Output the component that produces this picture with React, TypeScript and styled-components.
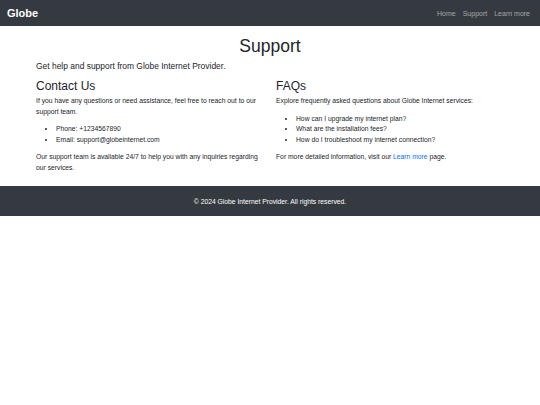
import styled, { createGlobalStyle } from "styled-components";

const GlobalStyle = createGlobalStyle`
  body {
    margin: 0;
    font-family: "Liberation Sans", Arial, sans-serif;
    color: #212529;
    background: #fff;
  }
`;

const Navbar = styled.nav`
  height: 26px;
  background-color: #343a40;
  display: flex;
  align-items: center;
  justify-content: space-between;
  padding: 0 10px 0 7px;
`;

const Brand = styled.a`
  color: #fff;
  font-size: 11px;
  font-weight: bold;
  text-decoration: none;
`;

const NavLinks = styled.div`
  display: flex;
  gap: 7px;
`;

const NavLink = styled.a`
  color: rgba(255, 255, 255, 0.55);
  font-size: 7px;
  text-decoration: none;
`;

const Main = styled.main`
  width: 468px;
  margin: 0 auto;
  padding-top: 10px;
`;

const Title = styled.h1`
  margin: 0 0 3px;
  font-size: 17.5px;
  font-weight: 500;
  line-height: 1.2;
  text-align: center;
`;

const Lead = styled.p`
  margin: 0 0 6px;
  font-size: 8.45px;
  line-height: 1.55;
`;

const Row = styled.div`
  display: grid;
  grid-template-columns: 1fr 1fr;
  gap: 12px;
`;

const Col = styled.section``;

const Heading = styled.h3`
  margin: 0 0 3px;
  font-size: 12px;
  font-weight: 500;
  line-height: 1.2;
`;

const Text = styled.p`
  margin: 0 0 7px;
  font-size: 6.75px;
  line-height: 10.5px;
`;

const List = styled.ul`
  margin: 0 0 7px;
  padding-left: 20px;
  font-size: 6.75px;
  line-height: 10.5px;
`;

const Link = styled.a`
  color: #0d6efd;
  text-decoration: none;
`;

const Footer = styled.footer`
  margin-top: 6px;
  height: 30px;
  background-color: #343a40;
  color: #fff;
  font-size: 6.75px;
  display: flex;
  align-items: center;
  justify-content: center;
`;

function App() {
  return (
    <>
      <GlobalStyle />
      <Navbar>
        <Brand href="#">Globe</Brand>
        <NavLinks>
          <NavLink href="#">Home</NavLink>
          <NavLink href="#">Support</NavLink>
          <NavLink href="#">Learn more</NavLink>
        </NavLinks>
      </Navbar>
      <Main>
        <Title>Support</Title>
        <Lead>Get help and support from Globe Internet Provider.</Lead>
        <Row>
          <Col>
            <Heading>Contact Us</Heading>
            <Text>
              If you have any questions or need assistance, feel free to reach
              out to our support team.
            </Text>
            <List>
              <li>Phone: +1234567890</li>
              <li>Email: support@globeinternet.com</li>
            </List>
            <Text>
              Our support team is available 24/7 to help you with any inquiries
              regarding our services.
            </Text>
          </Col>
          <Col>
            <Heading>FAQs</Heading>
            <Text>
              Explore frequently asked questions about Globe Internet services:
            </Text>
            <List>
              <li>How can I upgrade my internet plan?</li>
              <li>What are the installation fees?</li>
              <li>How do I troubleshoot my internet connection?</li>
            </List>
            <Text>
              For more detailed information, visit our{" "}
              <Link href="#">Learn more</Link> page.
            </Text>
          </Col>
        </Row>
      </Main>
      <Footer>© 2024 Globe Internet Provider. All rights reserved.</Footer>
    </>
  );
}

export default App;
